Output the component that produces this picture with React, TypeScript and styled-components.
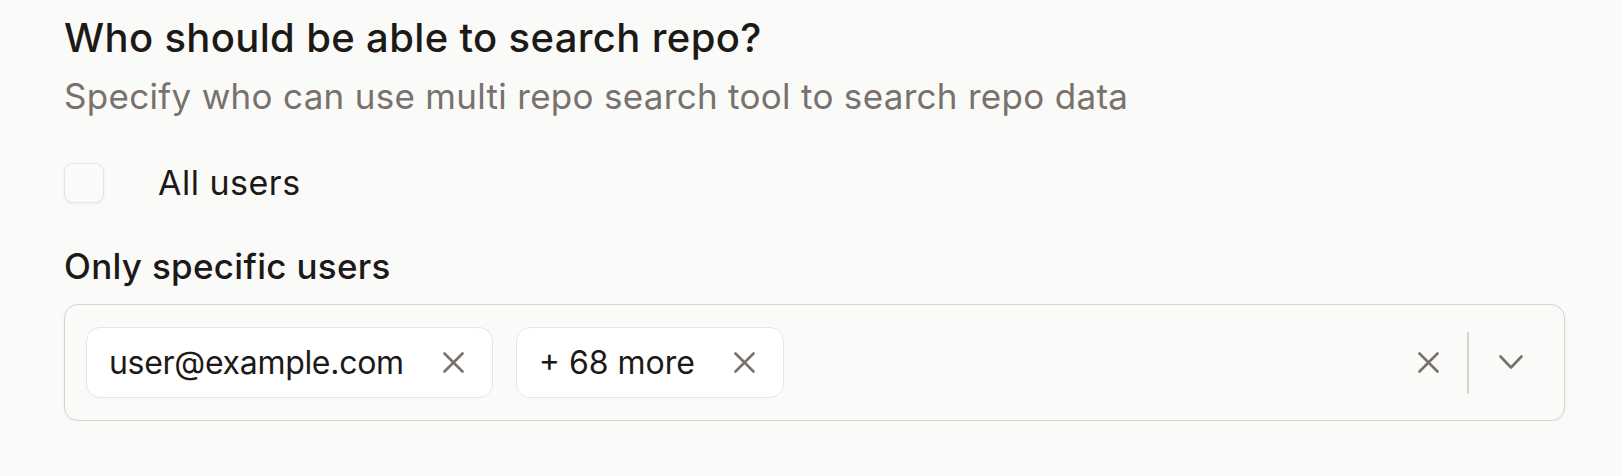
import React from "react";
import styled, { createGlobalStyle } from "styled-components";

const Global = createGlobalStyle`
  html, body { margin: 0; padding: 0; background: #fafaf9; }
  body { font-family: Inter, "Noto Sans", sans-serif; color: #1c1917; }
`;

const Page = styled.div`
  padding: 14px 57px 0 64px;
  display: flex;
  flex-direction: column;
`;

const Heading = styled.h2`
  margin: 0;
  font-size: 40px;
  line-height: 48px;
  font-weight: 500;
  letter-spacing: 0.35px;
  color: #1c1917;
`;

const Subtitle = styled.p`
  margin: 12px 0 0;
  font-size: 35px;
  line-height: 44px;
  letter-spacing: 0.3px;
  color: #78716c;
`;

const CheckRow = styled.label`
  margin-top: 45px;
  display: flex;
  align-items: center;
  gap: 54px;
  font-size: 34px;
  line-height: 40px;
  letter-spacing: 0.5px;
`;

const Box = styled.span`
  width: 38px;
  height: 38px;
  border: 1px solid #e7e5e4;
  border-radius: 9px;
  background: #fafaf9;
  box-shadow: 0 1px 3px rgba(0, 0, 0, 0.06);
  flex: none;
`;

const Label = styled.div`
  margin-top: 41px;
  font-size: 35px;
  line-height: 44px;
  font-weight: 500;
  letter-spacing: 0.3px;
`;

const Select = styled.div`
  margin-top: 16px;
  height: 115px;
  border: 1px solid #d6d3d1;
  border-radius: 14px;
  box-shadow: 0 1px 3px rgba(0, 0, 0, 0.06);
  display: flex;
  align-items: center;
  padding: 0 41px 0 21px;
`;

const Chips = styled.div`
  flex: 1;
  display: flex;
  gap: 23px;
`;

const Chip = styled.div`
  height: 69px;
  box-sizing: content-box;
  border: 1px solid #e7e5e4;
  border-radius: 14px;
  background: #ffffff;
  display: flex;
  align-items: center;
  padding: 0 28px 0 22px;
  gap: 39px;
  font-size: 32px;
`;

const ChipText = styled.span<{ $track: number }>`
  letter-spacing: ${(p) => p.$track}px;
`;

const IconBtn = styled.span`
  display: flex;
  align-items: center;
  justify-content: center;
  color: #78716c;
`;

const Divider = styled.span`
  width: 2px;
  height: 62px;
  background: #d6d3d1;
  margin: 0 30px 0 28px;
`;

const XIcon = ({ size = 21 }: { size?: number }) => (
  <svg width={size} height={size} viewBox="0 0 21 21" fill="none">
    <path d="M1.5 1.5 L19.5 19.5 M19.5 1.5 L1.5 19.5" stroke="currentColor" strokeWidth="2.6" strokeLinecap="round" />
  </svg>
);

const Chevron = () => (
  <svg width="24" height="15" viewBox="0 0 24 15" fill="none">
    <path d="M1.5 1.5 L12 12.5 L22.5 1.5" stroke="currentColor" strokeWidth="2.6" strokeLinecap="round" strokeLinejoin="round" />
  </svg>
);

export default function App() {
  return (
    <>
      <Global />
      <Page>
        <Heading>Who should be able to search repo?</Heading>
        <Subtitle>Specify who can use multi repo search tool to search repo data</Subtitle>
        <CheckRow>
          <Box />
          All users
        </CheckRow>
        <Label>Only specific users</Label>
        <Select>
          <Chips>
            <Chip>
              <ChipText $track={-0.3}>user@example.com</ChipText>
              <IconBtn><XIcon /></IconBtn>
            </Chip>
            <Chip>
              <ChipText $track={0}>+ 68 more</ChipText>
              <IconBtn><XIcon /></IconBtn>
            </Chip>
          </Chips>
          <IconBtn><XIcon /></IconBtn>
          <Divider />
          <IconBtn><Chevron /></IconBtn>
        </Select>
      </Page>
    </>
  );
}
